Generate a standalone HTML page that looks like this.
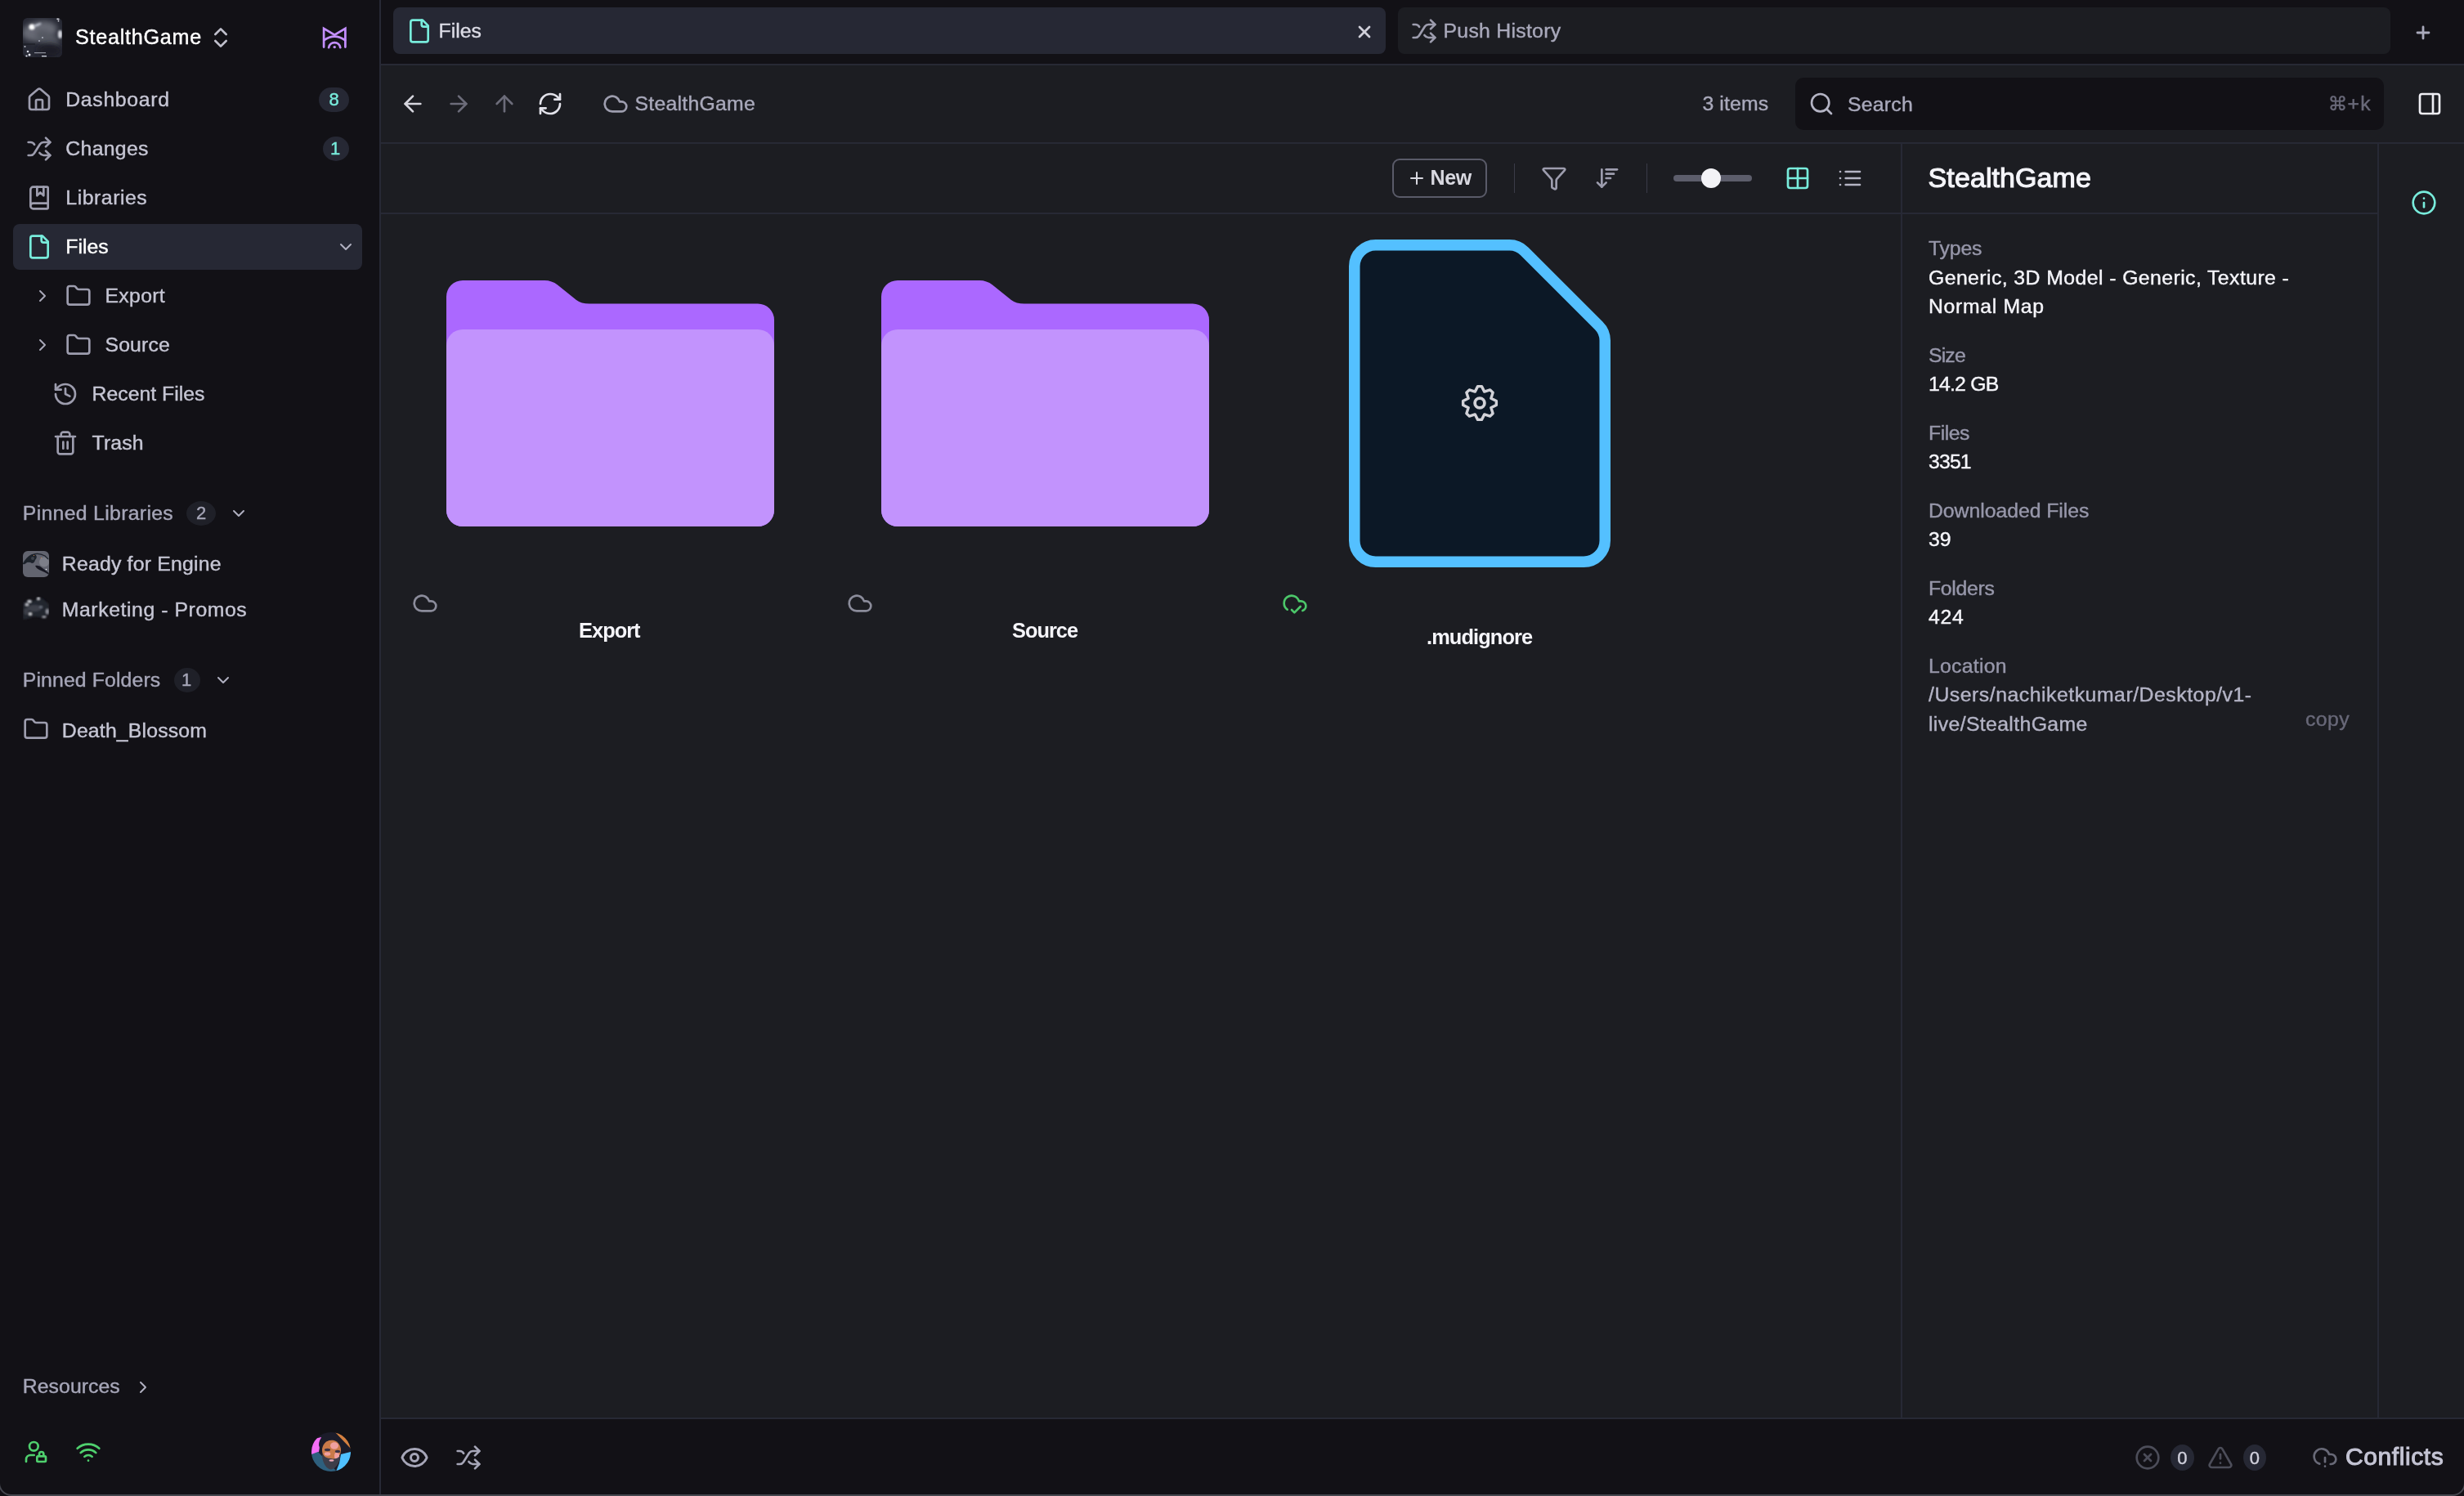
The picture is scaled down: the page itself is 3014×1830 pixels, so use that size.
<!DOCTYPE html>
<html lang="en"><head><meta charset="utf-8"><title>StealthGame - Files</title>
<style>
html,body{margin:0;padding:0;background:#121116;overflow:hidden;}
body{width:3014px;height:1830px;overflow:hidden;position:relative;font-family:"Liberation Sans", "DejaVu Sans", sans-serif;}
#app{position:absolute;left:0;top:0;width:3014px;height:1830px;overflow:hidden;will-change:transform;}
#app aside,#app nav,#app header,#app section,#app main,#app footer{display:contents;}
#app div,#app span,#app svg{position:absolute;display:block;}
#app span{white-space:pre;}
@media (max-width:1600px){#app{transform:scale(.5);transform-origin:0 0;}}
</style></head>
<body><div id="app">
<section aria-label="Backgrounds">
<div style="left:466px;top:0px;width:2548px;height:78px;background:#121116;"></div>
<div style="left:466px;top:80px;width:2548px;height:1654px;background:#1c1d22;"></div>
<div style="left:466px;top:1736px;width:2548px;height:92px;background:#121116;"></div>
<div style="left:464px;top:0px;width:2px;height:1830px;background:#272935;"></div>
<div style="left:466px;top:78px;width:2548px;height:2px;background:#272935;"></div>
<div style="left:466px;top:174px;width:2548px;height:2px;background:#272935;"></div>
<div style="left:466px;top:260px;width:2442px;height:2px;background:#272935;"></div>
<div style="left:466px;top:1734px;width:2548px;height:2px;background:#272935;"></div>
<div style="left:2325px;top:176px;width:2px;height:1558px;background:#272935;"></div>
<div style="left:2908px;top:176px;width:2px;height:1558px;background:#272935;"></div>
</section>
<aside aria-label="Sidebar">
<svg style="left:28px;top:22px" width="48" height="48" viewBox="0 0 48 48"><defs><clipPath id="cpA"><rect width="48" height="48" rx="5.5"/></clipPath><filter id="b1" x="-50%" y="-50%" width="200%" height="200%"><feGaussianBlur stdDeviation="1.2"/></filter><filter id="b3" x="-50%" y="-50%" width="200%" height="200%"><feGaussianBlur stdDeviation="3"/></filter></defs><g clip-path="url(#cpA)"><rect width="48" height="48" fill="#272934"/><ellipse cx="20" cy="16" rx="22" ry="12" fill="#686b75" filter="url(#b3)" transform="rotate(-10 20 16)"/><ellipse cx="30" cy="25" rx="16" ry="8" fill="#555862" filter="url(#b3)" transform="rotate(28 30 25)"/><ellipse cx="33" cy="40" rx="15" ry="9" fill="#1d1f27" filter="url(#b3)"/><circle cx="11" cy="11" r="3.6" fill="#ffffff" filter="url(#b1)"/><ellipse cx="18" cy="8.5" rx="5" ry="1.4" fill="#b9bdc9" filter="url(#b1)" transform="rotate(-22 18 8.5)"/><ellipse cx="45.5" cy="20" rx="2.6" ry="5" fill="#d4d6de" filter="url(#b1)"/><rect x="14" y="42" width="14" height="1.2" fill="#8f929d"/><rect x="0" y="31.5" width="15" height="1" fill="#17181f"/><rect x="23" y="46" width="6" height="1.4" fill="#c9ccd6"/><circle cx="6" cy="41" r="1.3" fill="#d8dae2"/><circle cx="8" cy="45" r="1.5" fill="#e4e6ee"/><circle cx="4.5" cy="46.5" r="1.1" fill="#e4e6ee"/><circle cx="2.5" cy="35" r="1" fill="#c0c3cc"/><circle cx="24" cy="24" r="1" fill="#b0b4c0"/><circle cx="20" cy="28" r=".9" fill="#b0b4c0"/><rect x="41.5" y="0.5" width="3" height="1.6" fill="#e8e8f0"/><circle cx="43.5" cy="3.6" r=".9" fill="#e8e8f0"/></g></svg>
<span style="left:92.00px;top:31.00px;font-size:25.2px;line-height:28px;color:#ffffff;letter-spacing:0.725px;-webkit-text-stroke:0.4px #ffffff;">StealthGame</span>
<svg style="left:254px;top:30px" width="32" height="32" viewBox="0 0 24 24" fill="none" stroke="#c0c0cc" stroke-width="2" stroke-linecap="round" stroke-linejoin="round"><path d="m7 15 5 5 5-5"/><path d="m7 9 5-5 5 5"/></svg>
<svg style="left:388px;top:26px" width="42" height="40" viewBox="388 26 42 40" fill="none" stroke="#c48fff" stroke-width="2.7" stroke-linecap="round" stroke-linejoin="miter"><path d="M396.1 57.6V34.8L409.2 42.6l13.2-7.8V57.6"/><path d="M396.3 49.2Q409.2 39.9 422.1 49.2"/><path d="M402.1 58.2A7.2 7.2 0 0 1 416.3 58.2"/><circle cx="409.2" cy="57.6" r="1.7" fill="#c48fff" stroke="none"/></svg>
<div style="left:16px;top:274px;width:427px;height:56px;background:#262834;border-radius:8px;"></div>
<svg style="left:32px;top:106px" width="32" height="32" viewBox="0 0 24 24" fill="none" stroke="#9d9dae" stroke-width="2" stroke-linecap="round" stroke-linejoin="round"><path d="M15 21v-8a1 1 0 0 0-1-1h-4a1 1 0 0 0-1 1v8"/><path d="M3 10a2 2 0 0 1 .709-1.528l7-5.999a2 2 0 0 1 2.582 0l7 5.999A2 2 0 0 1 21 10v9a2 2 0 0 1-2 2H5a2 2 0 0 1-2-2z"/></svg>
<span style="left:80.30px;top:108.00px;font-size:24.8px;line-height:27px;color:#c6c6d4;letter-spacing:0.665px;-webkit-text-stroke:0.4px #c6c6d4;">Dashboard</span>
<svg style="left:32px;top:166px" width="32" height="32" viewBox="0 0 24 24" fill="none" stroke="#9d9dae" stroke-width="2" stroke-linecap="round" stroke-linejoin="round"><path d="m18 14 4 4-4 4"/><path d="m18 2 4 4-4 4"/><path d="M2 18h1.973a4 4 0 0 0 3.3-1.7l5.454-8.6a4 4 0 0 1 3.3-1.7H22"/><path d="M2 6h1.972a4 4 0 0 1 3.6 2.2"/><path d="M22 18h-6.041a4 4 0 0 1-3.3-1.8l-.359-.45"/></svg>
<span style="left:80.30px;top:168.00px;font-size:24.8px;line-height:27px;color:#c6c6d4;letter-spacing:0.315px;-webkit-text-stroke:0.4px #c6c6d4;">Changes</span>
<svg style="left:32px;top:226px" width="32" height="32" viewBox="0 0 24 24" fill="none" stroke="#9d9dae" stroke-width="2" stroke-linecap="round" stroke-linejoin="round"><path d="M10 2v8l3-3 3 3V2"/><path d="M4 19.5v-15A2.5 2.5 0 0 1 6.5 2H19a1 1 0 0 1 1 1v18a1 1 0 0 1-1 1H6.5a1 1 0 0 1 0-5H20"/></svg>
<span style="left:80.30px;top:228.00px;font-size:24.8px;line-height:27px;color:#c6c6d4;letter-spacing:0.540px;-webkit-text-stroke:0.4px #c6c6d4;">Libraries</span>
<svg style="left:32px;top:286px" width="32" height="32" viewBox="0 0 24 24" fill="none" stroke="#78ecdc" stroke-width="2" stroke-linecap="round" stroke-linejoin="round"><path d="M15 2H6a2 2 0 0 0-2 2v16a2 2 0 0 0 2 2h12a2 2 0 0 0 2-2V7Z"/><path d="M14 2v4a2 2 0 0 0 2 2h4"/></svg>
<span style="left:80.30px;top:288.00px;font-size:24.8px;line-height:27px;color:#ffffff;letter-spacing:0.018px;-webkit-text-stroke:0.4px #ffffff;">Files</span>
<svg style="left:411px;top:290px" width="24" height="24" viewBox="0 0 24 24" fill="none" stroke="#b0b0c0" stroke-width="2" stroke-linecap="round" stroke-linejoin="round"><path d="m6 9 6 6 6-6"/></svg>
<div style="left:390px;top:107px;width:37px;height:30px;background:#262834;border-radius:15px;"></div>
<span style="left:402.57px;top:109.00px;font-size:22px;line-height:25px;color:#78ecdc;-webkit-text-stroke:0.4px #78ecdc;">8</span>
<div style="left:395px;top:167px;width:32px;height:30px;background:#262834;border-radius:50%;"></div>
<span style="left:404.07px;top:169.00px;font-size:22px;line-height:25px;color:#78ecdc;-webkit-text-stroke:0.4px #78ecdc;">1</span>
<svg style="left:40px;top:350px" width="24" height="24" viewBox="0 0 24 24" fill="none" stroke="#a8a8b8" stroke-width="2" stroke-linecap="round" stroke-linejoin="round"><path d="m9 18 6-6-6-6"/></svg>
<svg style="left:80px;top:346px" width="32" height="32" viewBox="0 0 24 24" fill="none" stroke="#9d9dae" stroke-width="2" stroke-linecap="round" stroke-linejoin="round"><path d="M20 20a2 2 0 0 0 2-2V8a2 2 0 0 0-2-2h-7.9a2 2 0 0 1-1.69-.9L9.6 3.9A2 2 0 0 0 7.93 3H4a2 2 0 0 0-2 2v13a2 2 0 0 0 2 2Z"/></svg>
<span style="left:128.50px;top:348.00px;font-size:24.8px;line-height:27px;color:#c6c6d4;letter-spacing:0.309px;-webkit-text-stroke:0.4px #c6c6d4;">Export</span>
<svg style="left:40px;top:410px" width="24" height="24" viewBox="0 0 24 24" fill="none" stroke="#a8a8b8" stroke-width="2" stroke-linecap="round" stroke-linejoin="round"><path d="m9 18 6-6-6-6"/></svg>
<svg style="left:80px;top:406px" width="32" height="32" viewBox="0 0 24 24" fill="none" stroke="#9d9dae" stroke-width="2" stroke-linecap="round" stroke-linejoin="round"><path d="M20 20a2 2 0 0 0 2-2V8a2 2 0 0 0-2-2h-7.9a2 2 0 0 1-1.69-.9L9.6 3.9A2 2 0 0 0 7.93 3H4a2 2 0 0 0-2 2v13a2 2 0 0 0 2 2Z"/></svg>
<span style="left:128.50px;top:408.00px;font-size:24.8px;line-height:27px;color:#c6c6d4;letter-spacing:0.130px;-webkit-text-stroke:0.4px #c6c6d4;">Source</span>
<svg style="left:64px;top:466px" width="32" height="32" viewBox="0 0 24 24" fill="none" stroke="#9d9dae" stroke-width="2" stroke-linecap="round" stroke-linejoin="round"><path d="M3 12a9 9 0 1 0 9-9 9.75 9.75 0 0 0-6.74 2.74L3 8"/><path d="M3 3v5h5"/><path d="M12 7v5l4 2"/></svg>
<span style="left:112.50px;top:468.00px;font-size:24.8px;line-height:27px;color:#c6c6d4;letter-spacing:0.011px;-webkit-text-stroke:0.4px #c6c6d4;">Recent Files</span>
<svg style="left:64px;top:526px" width="32" height="32" viewBox="0 0 24 24" fill="none" stroke="#9d9dae" stroke-width="2" stroke-linecap="round" stroke-linejoin="round"><path d="M3 6h18"/><path d="M19 6v14c0 1-1 2-2 2H7c-1 0-2-1-2-2V6"/><path d="M8 6V4c0-1 1-2 2-2h4c1 0 2 1 2 2v2"/><path d="M10 11v6"/><path d="M14 11v6"/></svg>
<span style="left:112.50px;top:528.00px;font-size:24.8px;line-height:27px;color:#c6c6d4;letter-spacing:0.175px;-webkit-text-stroke:0.4px #c6c6d4;">Trash</span>
<span style="left:27.80px;top:614.00px;font-size:24.8px;line-height:27px;color:#a6a6b8;letter-spacing:0.315px;-webkit-text-stroke:0.4px #a6a6b8;">Pinned Libraries</span>
<div style="left:228px;top:613px;width:36px;height:30px;background:#1f2028;border-radius:50%;"></div>
<span style="left:239.88px;top:615.00px;font-size:22px;line-height:25px;color:#a6a6b8;-webkit-text-stroke:0.4px #a6a6b8;">2</span>
<svg style="left:280px;top:616px" width="24" height="24" viewBox="0 0 24 24" fill="none" stroke="#b0b0c0" stroke-width="2" stroke-linecap="round" stroke-linejoin="round"><path d="m6 9 6 6 6-6"/></svg>
<svg style="left:28px;top:674px" width="32" height="32" viewBox="0 0 32 32"><defs><clipPath id="cpB"><rect width="32" height="32" rx="6"/></clipPath><filter id="b05" x="-50%" y="-50%" width="200%" height="200%"><feGaussianBlur stdDeviation=".6"/></filter></defs><g clip-path="url(#cpB)"><rect width="32" height="32" fill="#62646f"/><g filter="url(#b05)"><circle cx="26" cy="13.5" r="6" fill="#7c7e88"/><path d="M0 15Q4 8 9 5Q13 2.5 16 5Q18 8 15 11Q14 15 11 15Q8 13 5 14Q2 17 0 16Z" fill="#1d222c"/><path d="M13 4Q20 2 27 6L31 10" stroke="#1d222c" stroke-width="1.2" fill="none"/><path d="M15 18Q20 17 24 21L32 27V29Q25 25 20 23Q16 21 15 18Z" fill="#141820"/><circle cx="12" cy="9" r="2" fill="#3a3f4a"/></g><circle cx="28.5" cy="22.5" r=".8" fill="#f0f0f4"/><circle cx="13.5" cy="5.5" r=".6" fill="#d98a4a"/><circle cx="22.5" cy="8.5" r=".6" fill="#d98a4a"/></g></svg>
<span style="left:75.80px;top:676.00px;font-size:24.8px;line-height:27px;color:#c6c6d4;letter-spacing:0.202px;-webkit-text-stroke:0.4px #c6c6d4;">Ready for Engine</span>
<svg style="left:28px;top:730px" width="32" height="32" viewBox="0 0 32 32"><defs><filter id="b08" x="-50%" y="-50%" width="200%" height="200%"><feGaussianBlur stdDeviation=".9"/></filter></defs><g filter="url(#b08)"><path d="M0 8L7 3L14 5L19 0L25 3L32 9V22L26 26L14 24L6 27L0 28Z" fill="#23252e"/><ellipse cx="8" cy="5.5" rx="2.4" ry="1.6" fill="#d8dae2"/><ellipse cx="5" cy="9.5" rx="2" ry="1.5" fill="#c8cad4"/><ellipse cx="19" cy="2" rx="1.6" ry="1.8" fill="#e4e6ee"/><ellipse cx="9" cy="21" rx="1.8" ry="1.5" fill="#e8eaf0"/><ellipse cx="30" cy="18" rx="1.8" ry="3" fill="#9a9da8"/><ellipse cx="26" cy="25" rx="2.6" ry="1" fill="#b8bbc6"/><ellipse cx="14" cy="14" rx="9" ry="4" fill="#3c3f4a"/><ellipse cx="22" cy="12.5" rx="2" ry="1" fill="#7f8796"/><ellipse cx="4" cy="18" rx="3" ry="4" fill="#3a3c46"/></g></svg>
<span style="left:75.80px;top:732.00px;font-size:24.8px;line-height:27px;color:#c6c6d4;letter-spacing:0.564px;-webkit-text-stroke:0.4px #c6c6d4;">Marketing - Promos</span>
<span style="left:27.80px;top:818.00px;font-size:24.8px;line-height:27px;color:#a6a6b8;letter-spacing:0.126px;-webkit-text-stroke:0.4px #a6a6b8;">Pinned Folders</span>
<div style="left:213px;top:817px;width:31.5px;height:30px;background:#1f2028;border-radius:50%;"></div>
<span style="left:222.07px;top:819.00px;font-size:22px;line-height:25px;color:#a6a6b8;-webkit-text-stroke:0.4px #a6a6b8;">1</span>
<svg style="left:261px;top:820px" width="24" height="24" viewBox="0 0 24 24" fill="none" stroke="#b0b0c0" stroke-width="2" stroke-linecap="round" stroke-linejoin="round"><path d="m6 9 6 6 6-6"/></svg>
<svg style="left:28px;top:876px" width="32" height="32" viewBox="0 0 24 24" fill="none" stroke="#9d9dae" stroke-width="2" stroke-linecap="round" stroke-linejoin="round"><path d="M20 20a2 2 0 0 0 2-2V8a2 2 0 0 0-2-2h-7.9a2 2 0 0 1-1.69-.9L9.6 3.9A2 2 0 0 0 7.93 3H4a2 2 0 0 0-2 2v13a2 2 0 0 0 2 2Z"/></svg>
<span style="left:75.80px;top:880.00px;font-size:24.8px;line-height:27px;color:#c6c6d4;letter-spacing:0.177px;-webkit-text-stroke:0.4px #c6c6d4;">Death_Blossom</span>
<span style="left:27.80px;top:1682.00px;font-size:24.8px;line-height:27px;color:#a6a6b8;letter-spacing:0.050px;-webkit-text-stroke:0.4px #a6a6b8;">Resources</span>
<svg style="left:163px;top:1684.5px" width="24" height="24" viewBox="0 0 24 24" fill="none" stroke="#b0b0c0" stroke-width="2" stroke-linecap="round" stroke-linejoin="round"><path d="m9 18 6-6-6-6"/></svg>
<svg style="left:28px;top:1760px" width="32" height="32" viewBox="0 0 24 24" fill="none" stroke="#4fd06e" stroke-width="2" stroke-linecap="round" stroke-linejoin="round"><circle cx="10" cy="7" r="4"/><path d="M10.3 15H7a4 4 0 0 0-4 4v2"/><path d="M15 15.5V14a2 2 0 0 1 4 0v1.5"/><rect width="8" height="5" x="13" y="16" rx=".899"/></svg>
<svg style="left:92px;top:1760px" width="32" height="32" viewBox="0 0 24 24" fill="none" stroke="#4fd06e" stroke-width="2" stroke-linecap="round" stroke-linejoin="round"><path d="M12 20h.01"/><path d="M2 8.82a15 15 0 0 1 20 0"/><path d="M5 12.859a10 10 0 0 1 14 0"/><path d="M8.5 16.429a5 5 0 0 1 7 0"/></svg>
<svg style="left:381px;top:1752px" width="48" height="48" viewBox="0 0 48 48"><defs><clipPath id="cpC"><circle cx="24" cy="24" r="24"/></clipPath><filter id="b07" x="-50%" y="-50%" width="200%" height="200%"><feGaussianBlur stdDeviation=".7"/></filter></defs><g clip-path="url(#cpC)"><g filter="url(#b07)"><rect width="48" height="48" fill="#1d1f2c"/><path d="M0 9L12 6L9 24L0 29Z" fill="#f56ef5"/><path d="M0 27L8 24L31 48H0Z" fill="#2e5f7d"/><path d="M36 27L48 24V48H30L34 38Z" fill="#4fc0ff"/><path d="M29 0H35L48 13V20Z" fill="#d4803f"/><ellipse cx="24.5" cy="22" rx="11.5" ry="12.5" fill="#c97a48"/><ellipse cx="28" cy="16.5" rx="5" ry="4.2" fill="#f0a0a0"/><ellipse cx="19.5" cy="26.5" rx="3.8" ry="2.2" fill="#f0a0a0"/><ellipse cx="31" cy="29" rx="3" ry="4.5" fill="#f0a0a0"/><ellipse cx="19.5" cy="21.5" rx="3.6" ry="1.7" fill="#3a3344"/><ellipse cx="32" cy="23.5" rx="3.2" ry="1.7" fill="#3a3344"/><path d="M9 16Q9 3 24 3Q33 3 37 12L31 10Q24 8 16 12Q12 15 11 22Z" fill="#1d1f2c"/><path d="M13 27Q13 35 17 41Q22 48 28 44Q35 38 35 29Q30 34 24 32Q17 32 13 27Z" fill="#3c3e4a"/><ellipse cx="24.5" cy="34.5" rx="3" ry="1.2" fill="#f0a8b8"/></g></g></svg>
</aside>
<nav aria-label="Tabs">
<div style="left:481px;top:9px;width:1214px;height:57px;background:#262834;border-radius:8px;"></div>
<svg style="left:497px;top:21.5px" width="32" height="32" viewBox="0 0 24 24" fill="none" stroke="#78ecdc" stroke-width="2" stroke-linecap="round" stroke-linejoin="round"><path d="M15 2H6a2 2 0 0 0-2 2v16a2 2 0 0 0 2 2h12a2 2 0 0 0 2-2V7Z"/><path d="M14 2v4a2 2 0 0 0 2 2h4"/></svg>
<span style="left:536.50px;top:24.00px;font-size:24.8px;line-height:27px;color:#dcdce6;letter-spacing:0.018px;-webkit-text-stroke:0.4px #dcdce6;">Files</span>
<svg style="left:1657px;top:27px" width="24" height="24" viewBox="0 0 24 24" fill="none" stroke="#d0d0da" stroke-width="2.8" stroke-linecap="round" stroke-linejoin="round"><path d="M18 6 6 18"/><path d="m6 6 12 12"/></svg>
<div style="left:1710px;top:9px;width:1214px;height:57px;background:#1c1d22;border-radius:8px;"></div>
<svg style="left:1726px;top:22px" width="32" height="32" viewBox="0 0 24 24" fill="none" stroke="#9d9dae" stroke-width="2" stroke-linecap="round" stroke-linejoin="round"><path d="m18 14 4 4-4 4"/><path d="m18 2 4 4-4 4"/><path d="M2 18h1.973a4 4 0 0 0 3.3-1.7l5.454-8.6a4 4 0 0 1 3.3-1.7H22"/><path d="M2 6h1.972a4 4 0 0 1 3.6 2.2"/><path d="M22 18h-6.041a4 4 0 0 1-3.3-1.8l-.359-.45"/></svg>
<span style="left:1765.50px;top:24.00px;font-size:24.8px;line-height:27px;color:#a9a9bb;letter-spacing:0.275px;-webkit-text-stroke:0.4px #a9a9bb;">Push History</span>
<svg style="left:2952px;top:28px" width="24" height="24" viewBox="0 0 24 24" fill="none" stroke="#a9a9bb" stroke-width="2.8" stroke-linecap="round" stroke-linejoin="round"><path d="M5 12h14"/><path d="M12 5v14"/></svg>
</nav>
<header aria-label="Navigation toolbar">
<svg style="left:489px;top:111px" width="32" height="32" viewBox="0 0 24 24" fill="none" stroke="#d6d6de" stroke-width="2" stroke-linecap="round" stroke-linejoin="round"><path d="m12 19-7-7 7-7"/><path d="M19 12H5"/></svg>
<svg style="left:545px;top:111px" width="32" height="32" viewBox="0 0 24 24" fill="none" stroke="#6c6c7a" stroke-width="2" stroke-linecap="round" stroke-linejoin="round"><path d="M5 12h14"/><path d="m12 5 7 7-7 7"/></svg>
<svg style="left:601px;top:111px" width="32" height="32" viewBox="0 0 24 24" fill="none" stroke="#6c6c7a" stroke-width="2" stroke-linecap="round" stroke-linejoin="round"><path d="m5 12 7-7 7 7"/><path d="M12 19V5"/></svg>
<svg style="left:657px;top:111px" width="32" height="32" viewBox="0 0 24 24" fill="none" stroke="#e2e2ea" stroke-width="2" stroke-linecap="round" stroke-linejoin="round"><path d="M3 12a9 9 0 0 1 9-9 9.75 9.75 0 0 1 6.74 2.74L21 8"/><path d="M21 3v5h-5"/><path d="M21 12a9 9 0 0 1-9 9 9.75 9.75 0 0 1-6.74-2.74L3 16"/><path d="M8 16H3v5"/></svg>
<svg style="left:736.5px;top:111px" width="32" height="32" viewBox="0 0 24 24" fill="none" stroke="#9d9dae" stroke-width="2" stroke-linecap="round" stroke-linejoin="round"><path d="M17.5 19H9a7 7 0 1 1 6.71-9h1.79a4.5 4.5 0 1 1 0 9Z"/></svg>
<span style="left:776.50px;top:113.00px;font-size:24.8px;line-height:27px;color:#a9a9bb;letter-spacing:0.249px;-webkit-text-stroke:0.4px #a9a9bb;">StealthGame</span>
<span style="left:2082.40px;top:113.00px;font-size:24.8px;line-height:27px;color:#a9a9bb;letter-spacing:0.151px;-webkit-text-stroke:0.4px #a9a9bb;">3 items</span>
<div style="left:2196px;top:95px;width:720px;height:64px;background:#121116;border-radius:10px;"></div>
<svg style="left:2212px;top:111px" width="32" height="32" viewBox="0 0 24 24" fill="none" stroke="#b4b4c4" stroke-width="2" stroke-linecap="round" stroke-linejoin="round"><circle cx="11" cy="11" r="8"/><path d="m21 21-4.3-4.3"/></svg>
<span style="left:2260.00px;top:114.00px;font-size:24.8px;line-height:27px;color:#a9a9bb;letter-spacing:0.232px;-webkit-text-stroke:0.4px #a9a9bb;">Search</span>
<span style="left:2847.80px;top:114.00px;font-size:23.5px;line-height:26px;color:#6a6a7a;-webkit-text-stroke:0.4px #6a6a7a;">⌘</span>
<span style="left:2871.50px;top:113.00px;font-size:24.8px;line-height:27px;color:#6a6a7a;letter-spacing:1.384px;-webkit-text-stroke:0.4px #6a6a7a;">+k</span>
<svg style="left:2956px;top:111.3px" width="32" height="32" viewBox="0 0 24 24" fill="none" stroke="#eeeef4" stroke-width="2" stroke-linecap="round" stroke-linejoin="round"><rect width="18" height="18" x="3" y="3" rx="2"/><path d="M15 3v18"/></svg>
</header>
<section aria-label="View toolbar">
<div style="left:1703px;top:194px;width:116px;height:48px;box-sizing:border-box;border:2px solid #5a5b69;border-radius:9px"></div>
<svg style="left:1721px;top:206px" width="24" height="24" viewBox="0 0 24 24" fill="none" stroke="#d8d8e0" stroke-width="2" stroke-linecap="round" stroke-linejoin="round"><path d="M5 12h14"/><path d="M12 5v14"/></svg>
<span style="left:1749.50px;top:203.00px;font-size:25px;line-height:28px;color:#d8d8e0;letter-spacing:-0.391px;font-weight:700;">New</span>
<div style="left:1851.5px;top:200px;width:1.5px;height:36px;background:#3a3b48;"></div>
<div style="left:2013.5px;top:200px;width:1.5px;height:36px;background:#3a3b48;"></div>
<svg style="left:1884.7px;top:202px" width="32" height="32" viewBox="0 0 24 24" fill="none" stroke="#9d9dae" stroke-width="2" stroke-linecap="round" stroke-linejoin="round"><path d="M10 20a1 1 0 0 0 .553.895l2 1A1 1 0 0 0 14 21v-7a2 2 0 0 1 .517-1.341L21.74 4.67A1 1 0 0 0 21 3H3a1 1 0 0 0-.742 1.67l7.225 7.989A2 2 0 0 1 10 14z"/></svg>
<svg style="left:1949.5px;top:202px" width="32" height="32" viewBox="0 0 24 24" fill="none" stroke="#9d9dae" stroke-width="2" stroke-linecap="round" stroke-linejoin="round"><path d="m3 16 4 4 4-4"/><path d="M7 20V4"/><path d="M11 4h10"/><path d="M11 8h7"/><path d="M11 12h4"/></svg>
<div style="left:2047px;top:214px;width:96px;height:8px;background:#5c5d6b;border-radius:4px;"></div>
<div style="left:2081px;top:206px;width:24px;height:24px;background:#f2f2f6;border-radius:12px;"></div>
<svg style="left:2183px;top:202px" width="32" height="32" viewBox="0 0 24 24" fill="none" stroke="#78ecdc" stroke-width="2" stroke-linecap="round" stroke-linejoin="round"><rect width="18" height="18" x="3" y="3" rx="2"/><path d="M3 12h18"/><path d="M12 3v18"/></svg>
<svg style="left:2247.3px;top:202px" width="32" height="32" viewBox="0 0 24 24" fill="none" stroke="#b4b4c4" stroke-width="2" stroke-linecap="round" stroke-linejoin="round"><path d="M3 12h.01"/><path d="M3 18h.01"/><path d="M3 6h.01"/><path d="M8 12h13"/><path d="M8 18h13"/><path d="M8 6h13"/></svg>
</section>
<section aria-label="Details panel">
<span style="left:2358.60px;top:198.00px;font-size:34px;line-height:38px;color:#f5f5fa;letter-spacing:0.090px;-webkit-text-stroke:1.1px #f5f5fa;">StealthGame</span>
<svg style="left:2949px;top:232px" width="32" height="32" viewBox="0 0 24 24" fill="none" stroke="#78ecdc" stroke-width="2" stroke-linecap="round" stroke-linejoin="round"><circle cx="12" cy="12" r="10"/><path d="M12 16v-4"/><path d="M12 8h.01"/></svg>
<span style="left:2359.00px;top:290.00px;font-size:24.8px;line-height:27px;color:#9797aa;letter-spacing:-0.180px;-webkit-text-stroke:0.4px #9797aa;">Types</span>
<span style="left:2359.00px;top:326.00px;font-size:24.8px;line-height:27px;color:#f5f5fa;letter-spacing:0.418px;-webkit-text-stroke:0.4px #f5f5fa;">Generic, 3D Model - Generic, Texture -</span>
<span style="left:2359.00px;top:361.00px;font-size:24.8px;line-height:27px;color:#f5f5fa;letter-spacing:0.670px;-webkit-text-stroke:0.4px #f5f5fa;">Normal Map</span>
<span style="left:2359.00px;top:421.00px;font-size:24.8px;line-height:27px;color:#9797aa;letter-spacing:-0.841px;-webkit-text-stroke:0.4px #9797aa;">Size</span>
<span style="left:2359.00px;top:456.00px;font-size:24.8px;line-height:27px;color:#f5f5fa;letter-spacing:-0.798px;-webkit-text-stroke:0.4px #f5f5fa;">14.2 GB</span>
<span style="left:2359.00px;top:516.00px;font-size:24.8px;line-height:27px;color:#9797aa;letter-spacing:-0.482px;-webkit-text-stroke:0.4px #9797aa;">Files</span>
<span style="left:2359.00px;top:551.00px;font-size:24.8px;line-height:27px;color:#f5f5fa;letter-spacing:-0.839px;-webkit-text-stroke:0.4px #f5f5fa;">3351</span>
<span style="left:2359.00px;top:611.00px;font-size:24.8px;line-height:27px;color:#9797aa;letter-spacing:-0.045px;-webkit-text-stroke:0.4px #9797aa;">Downloaded Files</span>
<span style="left:2359.00px;top:646.00px;font-size:24.8px;line-height:27px;color:#f5f5fa;letter-spacing:0.025px;-webkit-text-stroke:0.4px #f5f5fa;">39</span>
<span style="left:2359.00px;top:706.00px;font-size:24.8px;line-height:27px;color:#9797aa;letter-spacing:-0.293px;-webkit-text-stroke:0.4px #9797aa;">Folders</span>
<span style="left:2359.00px;top:741.00px;font-size:24.8px;line-height:27px;color:#f5f5fa;letter-spacing:0.710px;-webkit-text-stroke:0.4px #f5f5fa;">424</span>
<span style="left:2359.00px;top:801.00px;font-size:24.8px;line-height:27px;color:#9797aa;letter-spacing:0.268px;-webkit-text-stroke:0.4px #9797aa;">Location</span>
<span style="left:2359.00px;top:836.00px;font-size:24.8px;line-height:27px;color:#b4b4c6;letter-spacing:0.520px;-webkit-text-stroke:0.4px #b4b4c6;">/Users/nachiketkumar/Desktop/v1-</span>
<span style="left:2359.00px;top:872.00px;font-size:24.8px;line-height:27px;color:#b4b4c6;letter-spacing:0.363px;-webkit-text-stroke:0.4px #b4b4c6;">live/StealthGame</span>
<span style="left:2820.00px;top:866.00px;font-size:24.8px;line-height:27px;color:#686878;letter-spacing:0.404px;-webkit-text-stroke:0.4px #686878;">copy</span>
</section>
<main aria-label="File grid">
<svg style="left:546px;top:343px" width="401" height="301" viewBox="0 0 401 301"><path d="M0 20A20 20 0 0 1 20 0H120Q129 0 136 5.5L159 24Q165 28.5 175 28.5H381A20 20 0 0 1 401 48.5V281A20 20 0 0 1 381 301H20A20 20 0 0 1 0 281Z" fill="#ab68ff"/><rect x="0" y="60" width="401" height="241" rx="20" fill="#c293fd"/></svg>
<svg style="left:1078px;top:343px" width="401" height="301" viewBox="0 0 401 301"><path d="M0 20A20 20 0 0 1 20 0H120Q129 0 136 5.5L159 24Q165 28.5 175 28.5H381A20 20 0 0 1 401 48.5V281A20 20 0 0 1 381 301H20A20 20 0 0 1 0 281Z" fill="#ab68ff"/><rect x="0" y="60" width="401" height="241" rx="20" fill="#c293fd"/></svg>
<svg style="left:503.7px;top:722.25px" width="32" height="32" viewBox="0 0 24 24" fill="none" stroke="#8b8c9b" stroke-width="2" stroke-linecap="round" stroke-linejoin="round"><path d="M17.5 19H9a7 7 0 1 1 6.71-9h1.79a4.5 4.5 0 1 1 0 9Z"/></svg>
<svg style="left:1035.7px;top:722.25px" width="32" height="32" viewBox="0 0 24 24" fill="none" stroke="#8b8c9b" stroke-width="2" stroke-linecap="round" stroke-linejoin="round"><path d="M17.5 19H9a7 7 0 1 1 6.71-9h1.79a4.5 4.5 0 1 1 0 9Z"/></svg>
<svg style="left:1567.7px;top:722.25px" width="32" height="32" viewBox="0 0 24 24" fill="none" stroke="#4cc76a" stroke-width="2" stroke-linecap="round" stroke-linejoin="round"><path d="m17 15-5.5 5.5L9 18"/><path d="M5 17.743A7 7 0 1 1 15.71 10h1.79a4.5 4.5 0 0 1 1.5 8.742"/></svg>
<span style="left:708.05px;top:757.00px;font-size:25.4px;line-height:28px;color:#f5f5fa;letter-spacing:-0.983px;font-weight:700;">Export</span>
<span style="left:1238.02px;top:757.00px;font-size:25.4px;line-height:28px;color:#f5f5fa;letter-spacing:-0.996px;font-weight:700;">Source</span>
<span style="left:1745.03px;top:765.00px;font-size:25.4px;line-height:28px;color:#f5f5fa;letter-spacing:-0.906px;font-weight:700;">.mudignore</span>
<svg style="left:1650px;top:293px" width="320" height="401" viewBox="0 0 320 401"><path d="M6.75 32.75A26 26 0 0 1 32.75 6.75H196.4A26 26 0 0 1 214.8 14.4L305.6 105.2A26 26 0 0 1 313.25 123.6V368.25A26 26 0 0 1 287.25 394.25H32.75A26 26 0 0 1 6.75 368.25Z" fill="#0c1826" stroke="#54c0ff" stroke-width="13.5" stroke-linejoin="round"/></svg>
<svg style="left:1780px;top:463px" width="60" height="60" viewBox="1780 463 60 60" fill="none" stroke="#d2d2d8" stroke-width="3.4" stroke-linejoin="round"><path d="M1807.57 472.64L1812.43 472.64L1815.74 479.14L1822.68 476.89L1826.11 480.32L1823.86 487.26L1830.36 490.57L1830.36 495.43L1823.86 498.74L1826.11 505.68L1822.68 509.11L1815.74 506.86L1812.43 513.36L1807.57 513.36L1804.26 506.86L1797.32 509.11L1793.89 505.68L1796.14 498.74L1789.64 495.43L1789.64 490.57L1796.14 487.26L1793.89 480.32L1797.32 476.89L1804.26 479.14Z"/><circle cx="1810" cy="493" r="5.9" stroke-width="3.8"/></svg>
</main>
<footer aria-label="Status bar">
<svg style="left:489px;top:1765px" width="36" height="36" viewBox="0 0 24 24" fill="none" stroke="#a6a6b8" stroke-width="2" stroke-linecap="round" stroke-linejoin="round"><path d="M2.062 12.348a1 1 0 0 1 0-.696 10.75 10.75 0 0 1 19.876 0 1 1 0 0 1 0 .696 10.75 10.75 0 0 1-19.876 0"/><circle cx="12" cy="12" r="3"/></svg>
<svg style="left:556.7px;top:1766.75px" width="32" height="32" viewBox="0 0 24 24" fill="none" stroke="#a6a6b8" stroke-width="2" stroke-linecap="round" stroke-linejoin="round"><path d="m18 14 4 4-4 4"/><path d="m18 2 4 4-4 4"/><path d="M2 18h1.973a4 4 0 0 0 3.3-1.7l5.454-8.6a4 4 0 0 1 3.3-1.7H22"/><path d="M2 6h1.972a4 4 0 0 1 3.6 2.2"/><path d="M22 18h-6.041a4 4 0 0 1-3.3-1.8l-.359-.45"/></svg>
<svg style="left:2611.2px;top:1767px" width="32" height="32" viewBox="0 0 24 24" fill="none" stroke="#4c4d59" stroke-width="2" stroke-linecap="round" stroke-linejoin="round"><circle cx="12" cy="12" r="10"/><path d="m15 9-6 6"/><path d="m9 9 6 6"/></svg>
<div style="left:2655px;top:1767px;width:29px;height:32px;background:#262834;border-radius:50%;"></div>
<span style="left:2663.18px;top:1770.50px;font-size:22px;line-height:25px;color:#d0d0dc;-webkit-text-stroke:0.4px #d0d0dc;">0</span>
<svg style="left:2699.7px;top:1767.3px" width="32" height="32" viewBox="0 0 24 24" fill="none" stroke="#4c4d59" stroke-width="2" stroke-linecap="round" stroke-linejoin="round"><path d="m21.73 18-8-14a2 2 0 0 0-3.48 0l-8 14A2 2 0 0 0 4 21h16a2 2 0 0 0 1.73-3"/><path d="M12 9v4"/><path d="M12 17h.01"/></svg>
<div style="left:2744px;top:1767px;width:28px;height:32px;background:#262834;border-radius:50%;"></div>
<span style="left:2751.78px;top:1770.50px;font-size:22px;line-height:25px;color:#d0d0dc;-webkit-text-stroke:0.4px #d0d0dc;">0</span>
<svg style="left:2827.9px;top:1766.8px" width="32" height="32" viewBox="0 0 24 24" fill="none" stroke="#686977" stroke-width="2" stroke-linecap="round" stroke-linejoin="round"><path d="M12 12v4"/><path d="M12 20h.01"/><path d="M17 18h.5a4.5 4.5 0 0 0 0-9h-1.79A7 7 0 1 0 7 17.708"/></svg>
<span style="left:2869.00px;top:1765.00px;font-size:30px;line-height:33px;color:#c4c4d4;letter-spacing:0.595px;-webkit-text-stroke:1.0px #c4c4d4;">Conflicts</span>
</footer>
<section aria-label="Window frame">
<div style="left:-2px;top:-20px;width:3014px;height:1846px;border:2px solid #45464e;border-radius:0 0 16px 16px;pointer-events:none"></div>
</section>
</div></body></html>
